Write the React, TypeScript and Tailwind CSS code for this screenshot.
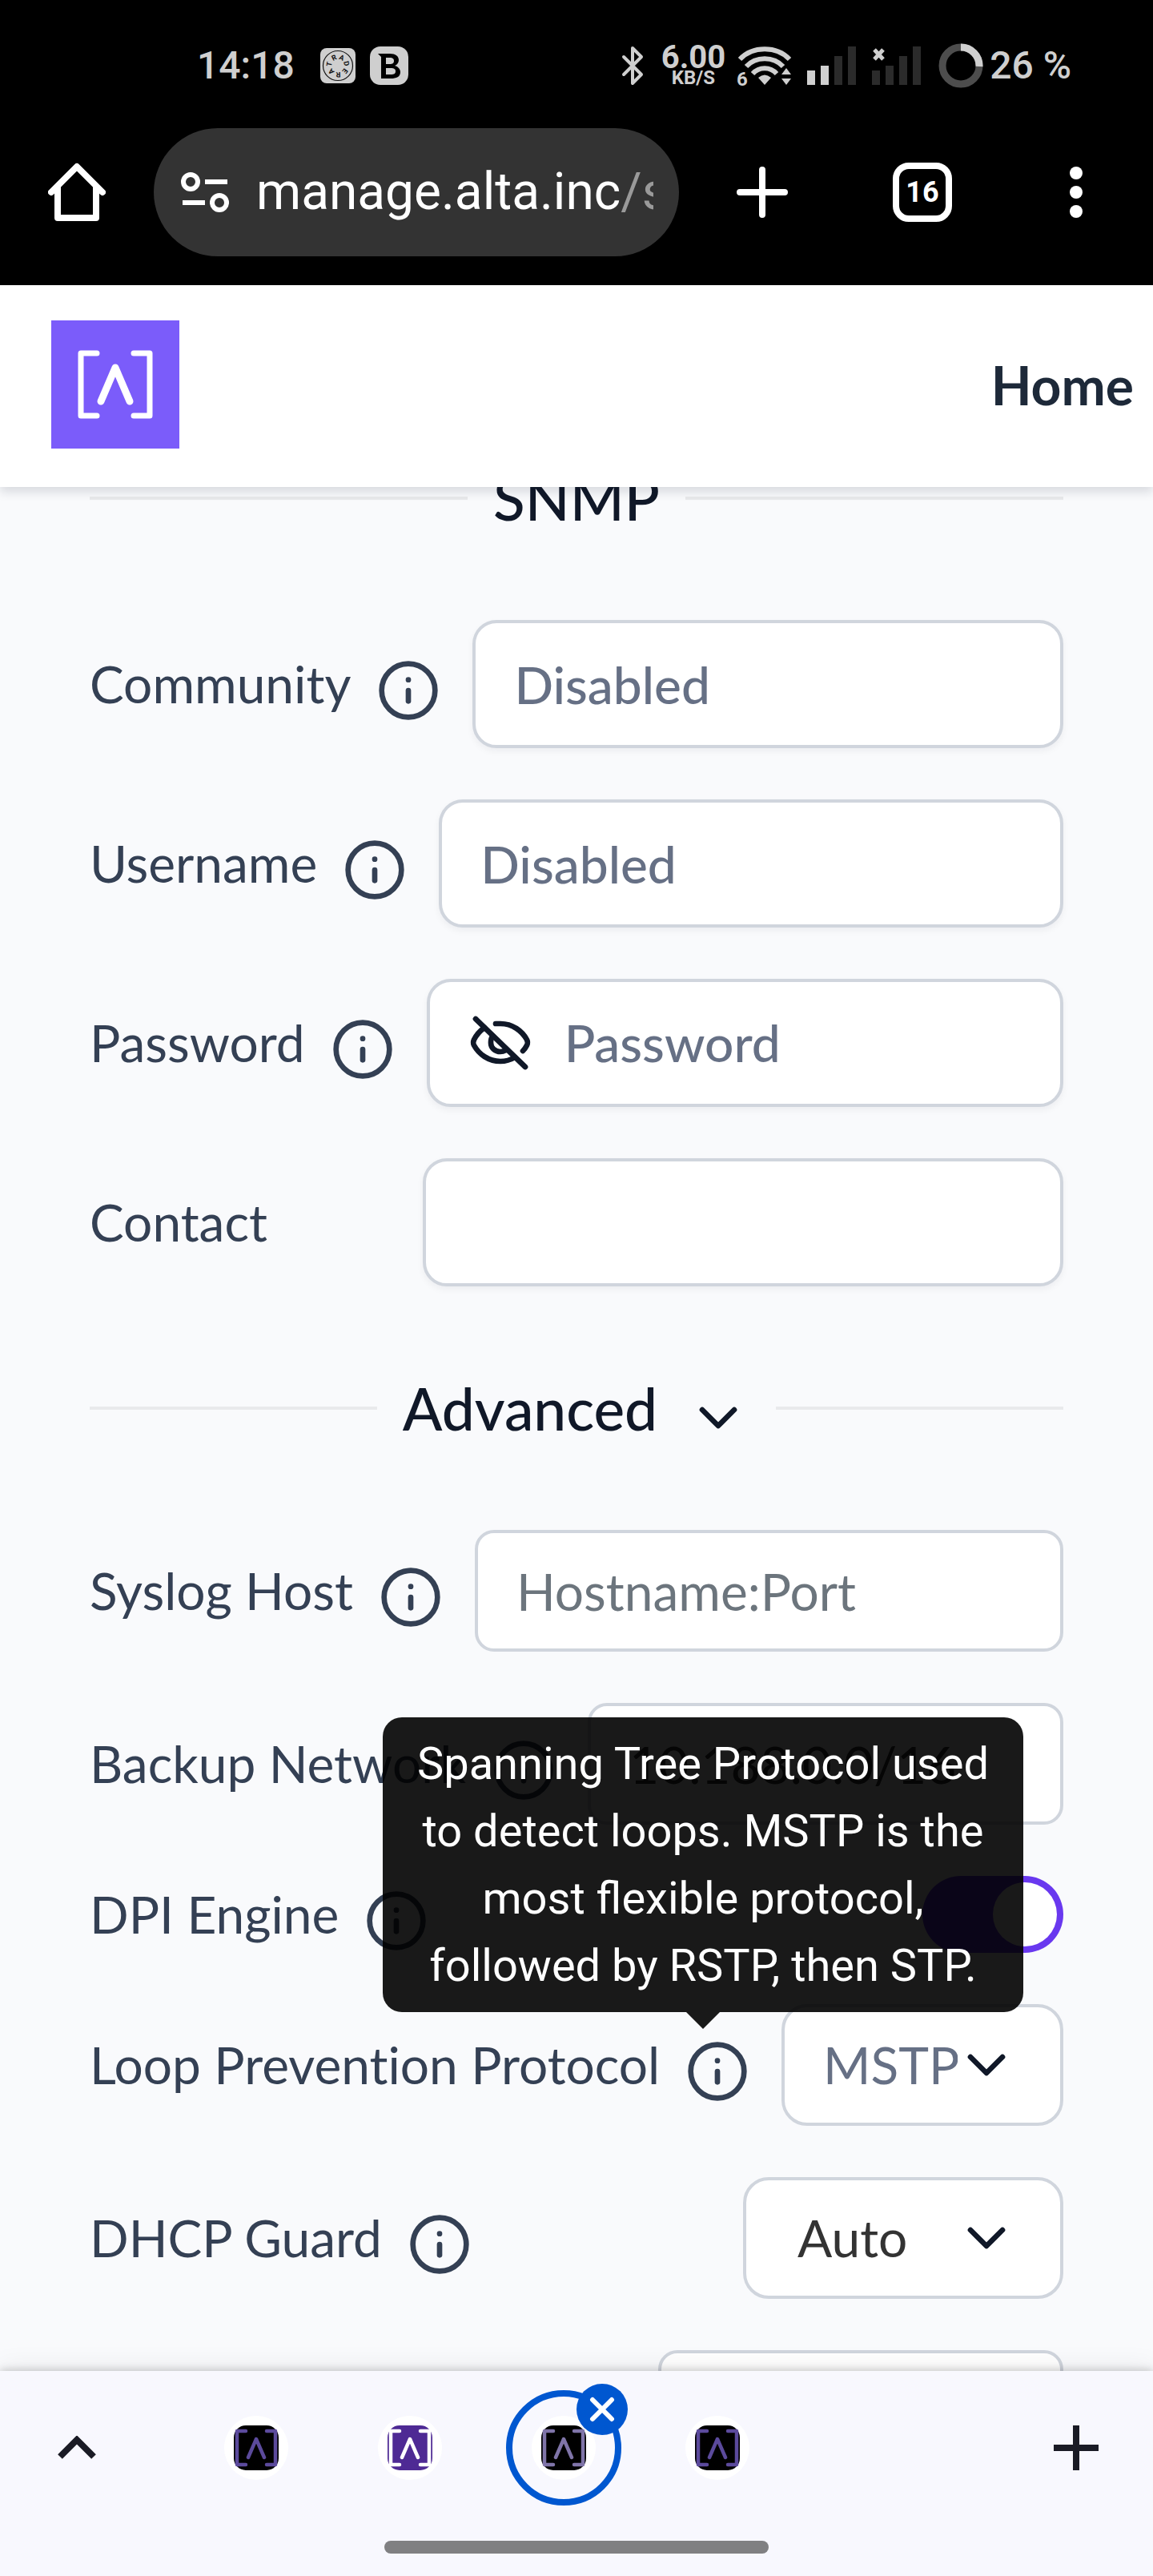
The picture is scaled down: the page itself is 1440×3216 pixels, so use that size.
import { ChevronDown, Info } from 'lucide-react';
import { ReactNode } from 'react';

const inputClass =
  'h-40 min-w-0 flex-1 rounded-[30px] border-4 border-[#d0d5dd] bg-white px-12 text-[64px] text-[#101828] shadow-[0_4px_8px_rgba(16,24,40,0.05)] placeholder:font-medium placeholder:text-[#667085] placeholder:opacity-100';

const plainInputClass =
  'h-38 min-w-0 flex-1 rounded-3xl border-4 border-[#d0d5dd] bg-white px-12 text-[64px] text-[#333] placeholder:text-[#6c757d] placeholder:opacity-100';

interface FieldProps {
  id: string;
  label: string;
  info?: boolean;
  children: ReactNode;
}

function Field({ id, label, info = true, children }: FieldProps) {
  return (
    <div className="relative flex items-center justify-between">
      <div className="flex shrink-0 items-center">
        <label
          htmlFor={id}
          className="text-[64px] leading-[80px] whitespace-nowrap text-[#344054] [font-variant-ligatures:no-common-ligatures]"
        >
          {label}
        </label>
        {info && (
          <button type="button" aria-label={`About ${label}`} className="mt-4 mr-10 ml-8 text-[#344054]">
            <Info className="size-20" />
          </button>
        )}
      </div>
      {children}
    </div>
  );
}

interface SelectBoxProps {
  id: string;
  value: string;
  muted?: boolean;
}

function SelectBox({ id, value, muted }: SelectBoxProps) {
  return (
    <div className="relative max-w-[400px] min-w-0 flex-1">
      <select
        id={id}
        defaultValue={value}
        className={`h-38 w-full appearance-none rounded-[32px] border-4 border-[#d0d5dd] bg-white pr-32 text-[64px] ${
          muted ? 'pl-12 text-[#667085]' : 'pl-16 text-[#333]'
        }`}
      >
        <option>{value}</option>
      </select>
      <ChevronDown className="pointer-events-none absolute top-9 right-14 size-20 text-[#101828]" />
    </div>
  );
}

function SectionHeading({ title, children }: { title: string; children?: ReactNode }) {
  return (
    <div className="flex h-20 items-center gap-8">
      <div className="h-1 flex-1 bg-[#e9eaec]" />
      <h2 className="flex items-center text-[73px] leading-[80px] font-medium text-[#101828]">
        {title}
        {children}
      </h2>
      <div className="h-1 flex-1 bg-[#e9eaec]" />
    </div>
  );
}

function EyeOffIcon() {
  return (
    <svg viewBox="0 0 80 80" className="size-20" fill="none" stroke="currentColor" strokeWidth="6.7" strokeLinecap="round" strokeLinejoin="round">
      <path d="M9 10 71 70" />
      <path d="M20 21C13 26 9 32 7 36c-1 2-1 5 0 7 6 11 18 20 33 20 7 0 13-2 18-5" />
      <path d="M34 16h6c15 0 27 9 33 20 1 2 1 5 0 7-1 2-3 5-5 7" />
      <path d="M30 32c-2 2-2 5-2 8 0 6 5 11 12 11 2 0 5-1 7-2" />
    </svg>
  );
}

function StatusBar() {
  return (
    <div className="flex h-40 items-center pt-1 pr-[102px] pl-[246px] text-[#cfcfcf]">
      <span className="text-5xl font-medium">14:18</span>
      <svg viewBox="0 0 44 44" className="ml-8 size-11">
        <rect width="44" height="44" rx="8" fill="#cfcfcf" />
        <circle cx="22" cy="22" r="18.5" fill="none" stroke="#111" strokeWidth="1.2" />
        {['R', 'A', 'D', 'E', 'R', 'A', 'T'].map((letter, i) => (
          <text
            key={i}
            x="22"
            y="14"
            textAnchor="middle"
            fontSize="9"
            fontWeight="700"
            fill="#111"
            transform={`rotate(${i * 51 - 26} 22 22)`}
          >
            {letter}
          </text>
        ))}
      </svg>
      <svg viewBox="0 0 48 48" className="ml-[18px] size-12">
        <rect width="48" height="48" rx="13" fill="#cfcfcf" />
        <path d="M10 9h15c7 0 11 3 11 8 0 3-2 6-5 7 4 1 7 4 7 8 0 6-5 8-12 8H14V13zM20 14v8h5c3 0 5-1 5-4s-2-4-5-4zM20 27v8h6c4 0 6-1 6-4s-2-4-6-4z" fill="#000" fillRule="evenodd" />
      </svg>
      <svg viewBox="0 0 28 50" className="ml-auto h-[50px] w-7" fill="none" stroke="currentColor" strokeWidth="4" strokeLinejoin="round" strokeLinecap="round">
        <path d="M3 14 25 36 14 47V3L25 14 3 36" />
      </svg>
      <div className="ml-[22px] flex flex-col items-center font-bold">
        <span className="text-[40px] leading-[30px]">6.00</span>
        <span className="text-2xl leading-[20px]">KB/S</span>
      </div>
      <svg viewBox="0 0 70 52" className="ml-3.5 h-[52px] w-[70px]">
        <g fill="none" stroke="currentColor" strokeWidth="6">
          <path d="M4 18C20 1 50 1 66 18" />
          <path d="M12 27C24 14 46 14 58 27" />
          <path d="M20 36C28 27 42 27 50 36" />
        </g>
        <path d="M35 50 27 41Q35 34 43 41zM56 37l6-8 6 8zM56 42h12l-6 8z" fill="currentColor" />
        <text x="0" y="51" fontSize="24" fontWeight="700" fill="currentColor">6</text>
      </svg>
      <svg viewBox="0 0 61 48" className="ml-[18px] h-12 w-[61px]">
        <path d="M0 30h10v18H0zM17 24h10v24H17z" fill="#cfcfcf" />
        <path d="M34 12h10v36H34zM51 0h10v48H51z" fill="#2b2b2b" />
      </svg>
      <svg viewBox="0 0 61 48" className="ml-5 h-12 w-[61px]">
        <path d="M0 30h10v18H0zM17 24h10v24H17zM34 12h10v36H34zM51 0h10v48H51z" fill="#2b2b2b" />
        <path d="M3 4 14 16M14 4 3 16" stroke="#cfcfcf" strokeWidth="5" />
      </svg>
      <svg viewBox="0 0 56 56" className="ml-[22px] size-14" fill="none" strokeWidth="9">
        <circle cx="28" cy="28" r="23" stroke="#4d4d4d" />
        <path d="M28 5a23 23 0 0 1 23 24" stroke="#cfcfcf" />
      </svg>
      <span className="ml-2 text-5xl font-medium">26 %</span>
    </div>
  );
}

function BrowserToolbar() {
  return (
    <div className="flex items-center pb-9 text-white">
      <button type="button" aria-label="Home page" className="flex w-48 justify-center">
        <svg viewBox="0 0 72 74" className="h-[74px] w-[72px]" fill="none" stroke="currentColor" strokeWidth="8" strokeLinecap="round" strokeLinejoin="round">
          <path d="M4 37 36 5l32 32M12 30v39h48V30" />
        </svg>
      </button>
      <div className="flex h-40 min-w-0 flex-1 items-center overflow-hidden rounded-full bg-[#333] pr-8 pl-[34px]">
        <svg viewBox="0 0 60 50" className="h-[50px] w-[60px] shrink-0" fill="none" stroke="currentColor" strokeWidth="6">
          <circle cx="12" cy="12" r="9" />
          <circle cx="48" cy="38" r="9" />
          <path d="M30 12h28M2 38h28" />
        </svg>
        <span className="ml-[34px] flex-1 overflow-hidden text-[64px] whitespace-nowrap">
          manage.alta.inc<span className="text-[#9a9a9a]">/s</span>
        </span>
      </div>
      <button type="button" aria-label="New tab" className="flex w-52 justify-center">
        <svg viewBox="0 0 64 64" className="size-16" stroke="currentColor" strokeWidth="8" strokeLinecap="round">
          <path d="M32 4v56M4 32h56" />
        </svg>
      </button>
      <button type="button" className="flex w-48 justify-center">
        <span className="flex size-[74px] items-center justify-center rounded-[20px] border-8 border-white text-4xl font-bold">
          16
        </span>
      </button>
      <button type="button" aria-label="Menu" className="flex w-48 justify-center">
        <svg viewBox="0 0 16 64" className="h-16 w-4" fill="currentColor">
          <circle cx="8" cy="8" r="8" />
          <circle cx="8" cy="32" r="8" />
          <circle cx="8" cy="56" r="8" />
        </svg>
      </button>
    </div>
  );
}

function Logo() {
  return (
    <svg viewBox="0 0 160 160" className="size-40" fill="none" stroke="#fff" strokeLinecap="round" strokeLinejoin="round">
      <rect width="160" height="160" fill="#7b5cfa" stroke="none" />
      <path d="M57 41H37v78h20M103 41h20v78h-20" strokeWidth="7" />
      <path d="M62 101 80 59l18 42" strokeWidth="9" />
    </svg>
  );
}

const tabs = [
  { bg: '#000', mark: '#5b4a9c' },
  { bg: '#4e2a94', mark: '#fff' },
  { bg: '#000', mark: '#7f74a8', active: true },
  { bg: '#000', mark: '#5b4a9c' },
];

function TabStrip() {
  return (
    <nav className="relative z-10 bg-[#f8f8fe] pb-7 shadow-[0_-1px_10px_rgba(0,0,0,0.2),0_-4px_32px_rgba(0,0,0,0.07)]">
      <div className="flex h-48 items-center text-[#1a1b25]">
        <button type="button" aria-label="Expand" className="mr-8 flex w-48 justify-center">
          <svg viewBox="0 0 48 30" className="h-[30px] w-12" fill="none" stroke="currentColor" strokeWidth="8">
            <path d="M3 26 24 5l21 21" />
          </svg>
        </button>
        {tabs.map((tab, i) => (
          <div key={i} className="flex w-48 justify-center">
            <button
              type="button"
              aria-label={`Tab ${i + 1}`}
              className={`relative flex size-36 items-center justify-center rounded-full ${
                tab.active ? 'border-8 border-[#0057d0]' : ''
              }`}
            >
              <span className="flex size-20 items-center justify-center rounded-full bg-white">
                <svg viewBox="0 0 56 56" className="size-14" fill="none" stroke={tab.mark} strokeWidth="4.5" strokeLinecap="round" strokeLinejoin="round">
                  <rect width="56" height="56" rx="15" fill={tab.bg} stroke="none" />
                  <path d="M15 7H4v42h11M41 7h11v42H41M18 40l10-23 10 23" />
                </svg>
              </span>
              {tab.active && (
                <span className="absolute -top-4 -right-4 flex size-16 items-center justify-center rounded-full bg-[#0057d0]">
                  <svg viewBox="0 0 32 32" className="size-8" stroke="#fff" strokeWidth="6" strokeLinecap="round">
                    <path d="M4 4l24 24M28 4 4 28" />
                  </svg>
                </span>
              )}
            </button>
          </div>
        ))}
        <button type="button" aria-label="Add tab" className="ml-auto flex w-48 justify-center">
          <svg viewBox="0 0 56 56" className="size-14" stroke="currentColor" strokeWidth="8">
            <path d="M28 0v56M0 28h56" />
          </svg>
        </button>
      </div>
      <div className="mx-auto mt-5 h-4 w-1/3 rounded-full bg-[#808082]" />
    </nav>
  );
}

export default function App() {
  return (
    <div className="flex h-screen flex-col bg-[#f9fafc] font-['Lato',sans-serif]">
      <div className="bg-black font-['Roboto',sans-serif]">
        <StatusBar />
        <BrowserToolbar />
      </div>

      <header className="relative z-10 flex items-center justify-between bg-white pt-11 pr-6 pb-12 pl-16 shadow-[0_6px_12px_rgba(16,24,40,0.14)]">
        <Logo />
        <a href="#home" className="text-[66px] font-bold text-[#1d2939]">
          Home
        </a>
      </header>

      <main className="min-h-0 flex-1 overflow-hidden px-28">
        <div className="-mt-[26px]">
          <SectionHeading title="SNMP" />
        </div>

        <div className="my-28 flex flex-col gap-16">
          <Field id="community" label="Community">
            <input id="community" type="text" placeholder="Disabled" className={inputClass} />
          </Field>
          <Field id="username" label="Username">
            <input id="username" type="text" placeholder="Disabled" className={inputClass} />
          </Field>
          <Field id="password" label="Password">
            <div className="flex h-40 min-w-0 flex-1 items-center gap-10 rounded-[30px] border-4 border-[#d0d5dd] bg-white px-12 shadow-[0_4px_8px_rgba(16,24,40,0.05)]">
              <button type="button" aria-label="Show password" className="text-[#101828]">
                <EyeOffIcon />
              </button>
              <input
                id="password"
                type="password"
                placeholder="Password"
                className="min-w-0 flex-1 bg-transparent text-[64px] placeholder:font-medium placeholder:text-[#667085] placeholder:opacity-100"
              />
            </div>
          </Field>
          <Field id="contact" label="Contact" info={false}>
            <input id="contact" type="text" className={`${inputClass} max-w-[800px]`} />
          </Field>
        </div>

        <SectionHeading title="Advanced">
          <button type="button" aria-label="Toggle advanced" className="mt-6 ml-9">
            <ChevronDown className="size-20" />
          </button>
        </SectionHeading>

        <div className="mt-28 flex flex-col gap-16">
          <Field id="syslog" label="Syslog Host">
            <input id="syslog" type="text" placeholder="Hostname:Port" className={plainInputClass} />
          </Field>
          <Field id="backup" label="Backup Network">
            <input id="backup" type="text" defaultValue="10.188.0.0/16" className={plainInputClass} />
          </Field>
          <Field id="dpi" label="DPI Engine">
            <input
              id="dpi"
              type="checkbox"
              defaultChecked
              className="flex h-24 w-44 appearance-none justify-start rounded-full bg-[#6938ef] p-2 before:size-20 before:rounded-full before:bg-white checked:justify-end"
            />
          </Field>
          <Field id="loop" label="Loop Prevention Protocol">
            <SelectBox id="loop" value="MSTP" muted />
            <div
              role="tooltip"
              className="absolute right-[50px] bottom-[142px] z-10 w-[800px] rounded-3xl bg-black/90 px-8 py-4 text-center font-['Roboto',sans-serif] text-[56px] leading-[84px] text-white"
            >
              Spanning Tree Protocol used to detect loops. MSTP is the most flexible protocol, followed by RSTP, then STP.
              <svg viewBox="0 0 42 21" className="absolute top-full left-1/2 h-[21px] w-[42px] -translate-x-1/2 fill-black/90">
                <path d="M0 0h42L21 21z" />
              </svg>
            </div>
          </Field>
          <Field id="dhcp" label="DHCP Guard">
            <SelectBox id="dhcp" value="Auto" />
          </Field>
          <div className="flex justify-end">
            <input type="text" aria-label="Value" className={`${plainInputClass} max-w-[506px]`} />
          </div>
        </div>
      </main>

      <TabStrip />
    </div>
  );
}
